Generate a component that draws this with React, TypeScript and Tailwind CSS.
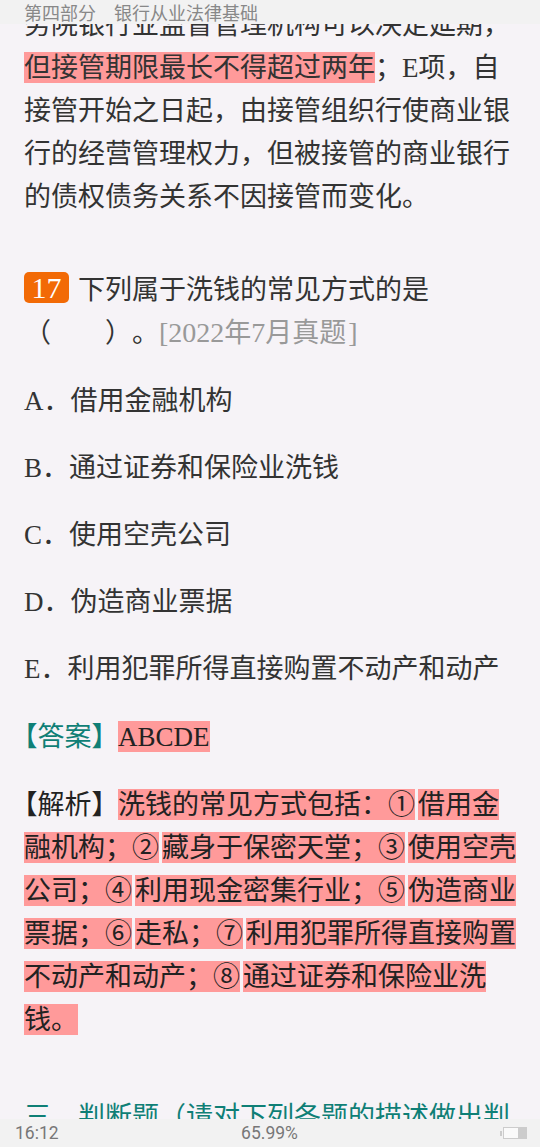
const mark = "bg-[#ff9a9a] pt-px";
const gap = "ml-[3px]";

function Bracket({ children, className }: { children: string; className?: string }) {
  return <span className={"[font-feature-settings:'halt'] " + (className ?? "")}>{children}</span>;
}

const options = [
  "A．借用金融机构",
  "B．通过证券和保险业洗钱",
  "C．使用空壳公司",
  "D．伪造商业票据",
  "E．利用犯罪所得直接购置不动产和动产",
];

export default function App() {
  return (
    <div className="flex h-[1147px] w-[540px] flex-col overflow-hidden bg-[#f6f3f7] font-['Liberation_Serif','Noto_Sans_CJK_SC',serif] text-[27px] leading-[43px] text-[#333] [text-spacing-trim:space-all]">
      <header className="z-10 flex h-6 shrink-0 items-center gap-[18px] bg-[#f2f2f2] px-6 font-['Noto_Sans_CJK_SC',sans-serif] text-[18px] leading-6 text-[#888]">
        <span>第四部分</span>
        <span>银行从业法律基础</span>
      </header>

      <main className="min-h-0 flex-1 overflow-hidden px-6">
        <div className="-mt-5">
          <p>
            务院银行业监督管理机构可以决定延期，
            <span className={mark}>但接管期限最长不得超过两年</span>
            ；E项，自接管开始之日起，由接管组织行使商业银行的经营管理权力，但被接管的商业银行的债权债务关系不因接管而变化。
          </p>

          <p className="mt-[50px]">
            <span className="mr-[9px] inline-block h-[31px] w-[45px] rounded-[5px] bg-[#f26a06] text-center align-[1px] text-[30px] leading-[31px] text-white">
              17
            </span>
            下列属于洗钱的常见方式的是
            <br />
            （　　）。
            <span className="text-[#999]">
              <span className="text-[28px] leading-none">[2022</span>年<span className="text-[28px] leading-none">7</span>月真题<span className="ml-0.5 text-[28px] leading-none">]</span>
            </span>
          </p>

          <div className="mt-[25px] flex flex-col gap-6">
            {options.map((o) => (
              <p key={o}>{o}</p>
            ))}
          </div>

          <p className="mt-[25px]">
            <span className="mr-[13px] text-[#0f7f76]">
              <Bracket>【</Bracket>答案<Bracket>】</Bracket>
            </span>
            <span className={mark + " text-[#222]"}>ABCDE</span>
          </p>

          <p className="mt-[25px] text-[#222]">
            <span className="mr-[13px]">
              <Bracket>【</Bracket>解析<Bracket>】</Bracket>
            </span>
            <span className={mark}>洗钱的常见方式包括：①</span>
            <span className={mark + " " + gap}>借用金融机构；②</span>
            <span className={mark + " " + gap}>藏身于保密天堂；③</span>
            <span className={mark + " " + gap}>使用空壳公司；④</span>
            <span className={mark + " " + gap}>利用现金密集行业；⑤</span>
            <span className={mark + " " + gap}>伪造商业票据；⑥</span>
            <span className={mark + " " + gap}>走私；⑦</span>
            <span className={mark + " " + gap}>利用犯罪所得直接购置不动产和动产；⑧</span>
            <span className={mark + " " + gap}>通过证券和保险业洗钱。</span>
          </p>

          <p className="mt-[54px] text-[#0f7f76]">三、判断题（请对下列各题的描述做出判断，正确的用√表示，错误的用×表示）</p>
        </div>
      </main>

      <footer className="z-10 flex h-7 shrink-0 items-center justify-between bg-[#f2f2f2] pl-[15px] pr-[13px] font-['Roboto',sans-serif] text-[17.5px] leading-7 text-[#777]">
        <span className="w-[226px]">16:12</span>
        <span>65.99%</span>
        <span className="flex w-[229px] items-center justify-end">
          <span className="h-[5px] w-0.5 bg-[#ccc]" />
          <span className="ml-px flex h-3 w-6 justify-end border border-[#ccc] bg-[#fafafa]">
            <span className="h-full w-2 bg-[#ccc]" />
          </span>
        </span>
      </footer>
    </div>
  );
}
